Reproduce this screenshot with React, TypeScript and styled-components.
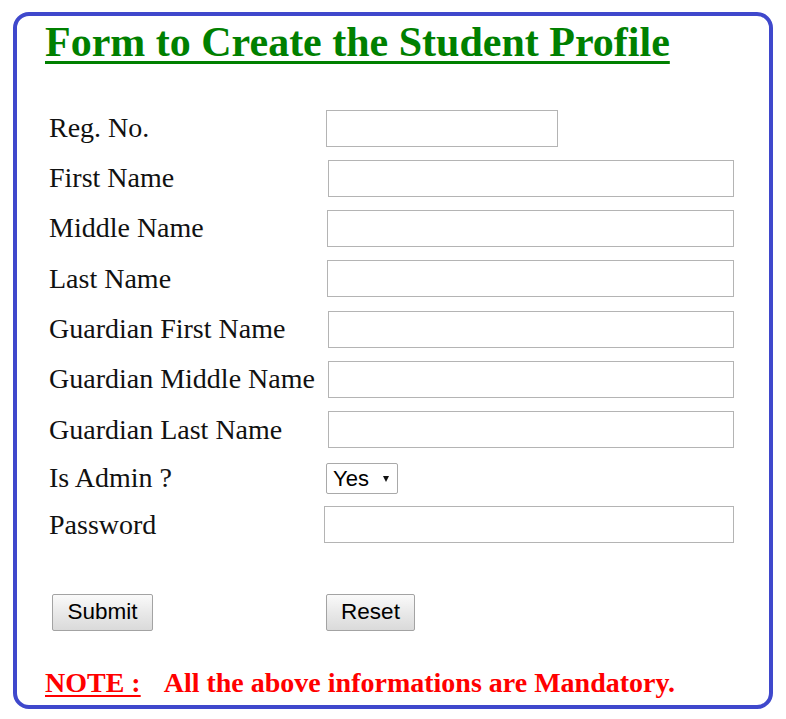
import React from "react";
import styled, { createGlobalStyle } from "styled-components";

const Global = createGlobalStyle`
  html, body { margin: 0; padding: 0; background: #ffffff; }
  body { font-family: "Liberation Serif", "Times New Roman", serif; }
`;

const Frame = styled.div`
  box-sizing: border-box;
  margin: 12px 0 0 13px;
  width: 760px;
  height: 697px;
  border: 4px solid #3f48cc;
  border-radius: 16px;
  padding: 2px 0 0 28px;
  display: flex;
  flex-direction: column;
`;

const Title = styled.h1`
  margin: 0;
  font-family: "Liberation Serif", "Times New Roman", serif;
  font-weight: bold;
  font-size: 42px;
  line-height: 48px;
  color: #008000;
  text-decoration: underline;
  text-decoration-thickness: 3px;
  text-underline-offset: 5px;
  white-space: nowrap;
`;

const Form = styled.form`
  display: flex;
  flex-direction: column;
  margin-top: 37px;
  padding-left: 4px;
`;

const Row = styled.div<{ $h: number }>`
  display: flex;
  align-items: center;
  height: ${(p) => p.$h}px;
`;

const Label = styled.label`
  width: 278px;
  flex: none;
  font-family: "Liberation Serif", "Times New Roman", serif;
  font-size: 28px;
  color: #111;
  white-space: nowrap;
`;

const Input = styled.input<{ $w: number; $dx?: number }>`
  box-sizing: border-box;
  width: ${(p) => p.$w}px;
  height: 37px;
  margin-left: ${(p) => p.$dx ?? 0}px;
  border: 1px solid #b4b4b4;
  border-radius: 0;
  background: #fff;
  padding: 2px 6px;
  font-family: "Liberation Sans", Arial, sans-serif;
  font-size: 20px;
  outline: none;
`;

const SelectWrap = styled.div`
  position: relative;
  margin-left: -1px;
`;

const Select = styled.select`
  appearance: none;
  -webkit-appearance: none;
  box-sizing: border-box;
  width: 72px;
  height: 31px;
  border: 1px solid #a9a9a9;
  border-radius: 2px;
  background: #fff;
  padding: 0 0 0 6px;
  font-family: "Liberation Sans", Arial, sans-serif;
  font-size: 22px;
  color: #000;
  outline: none;
`;

const Arrow = styled.span`
  position: absolute;
  right: 9px;
  top: 13px;
  width: 0;
  height: 0;
  border-left: 3.5px solid transparent;
  border-right: 3.5px solid transparent;
  border-top: 6px solid #111;
  pointer-events: none;
`;

const ButtonRow = styled.div`
  display: flex;
  align-items: center;
  margin-top: 46px;
`;

const ButtonCell = styled.div`
  width: 277px;
  flex: none;
  padding-left: 3px;
  box-sizing: border-box;
`;

const Button = styled.button<{ $w: number }>`
  box-sizing: border-box;
  width: ${(p) => p.$w}px;
  height: 37px;
  border: 1px solid #a3a3a3;
  border-radius: 2px;
  background: linear-gradient(#fafafa, #e9e9e9 50%, #dadada);
  font-family: "Liberation Sans", Arial, sans-serif;
  font-size: 22.5px;
  color: #000;
  padding: 0;
  cursor: pointer;
`;

const Note = styled.p`
  margin: 36px 0 0 0;
  font-family: "Liberation Serif", "Times New Roman", serif;
  font-weight: bold;
  font-size: 28px;
  line-height: 32px;
  color: #ff0000;
  white-space: nowrap;
`;

const NoteTag = styled.span`
  text-decoration: underline;
  text-decoration-thickness: 2px;
  text-underline-offset: 3px;
  margin-right: 23px;
`;

type Field = { label: string; w: number; dx?: number; h: number };

const fields: Field[] = [
  { label: "Reg. No.", w: 232, dx: -1, h: 50 },
  { label: "First Name", w: 406, dx: 1, h: 50 },
  { label: "Middle Name", w: 407, h: 50.5 },
  { label: "Last Name", w: 407, h: 50.5 },
  { label: "Guardian First Name", w: 406, dx: 1, h: 50 },
  { label: "Guardian Middle Name", w: 406, dx: 1, h: 50.5 },
  { label: "Guardian Last Name", w: 406, dx: 1, h: 50 },
];

export default function App() {
  return (
    <>
      <Global />
      <Frame>
        <Title>Form to Create the Student Profile</Title>
        <Form onSubmit={(e) => e.preventDefault()}>
          {fields.map((f) => (
            <Row key={f.label} $h={f.h}>
              <Label>{f.label}</Label>
              <Input type="text" $w={f.w} $dx={f.dx} />
            </Row>
          ))}
          <Row $h={47}>
            <Label>Is Admin ?</Label>
            <SelectWrap>
              <Select defaultValue="Yes">
                <option>Yes</option>
                <option>No</option>
              </Select>
              <Arrow />
            </SelectWrap>
          </Row>
          <Row $h={46}>
            <Label>Password</Label>
            <Input type="password" $w={410} $dx={-3} />
          </Row>
          <ButtonRow>
            <ButtonCell>
              <Button type="submit" $w={101}>Submit</Button>
            </ButtonCell>
            <Button type="reset" $w={89}>Reset</Button>
          </ButtonRow>
        </Form>
        <Note>
          <NoteTag>NOTE :</NoteTag>All the above informations are Mandatory.
        </Note>
      </Frame>
    </>
  );
}
